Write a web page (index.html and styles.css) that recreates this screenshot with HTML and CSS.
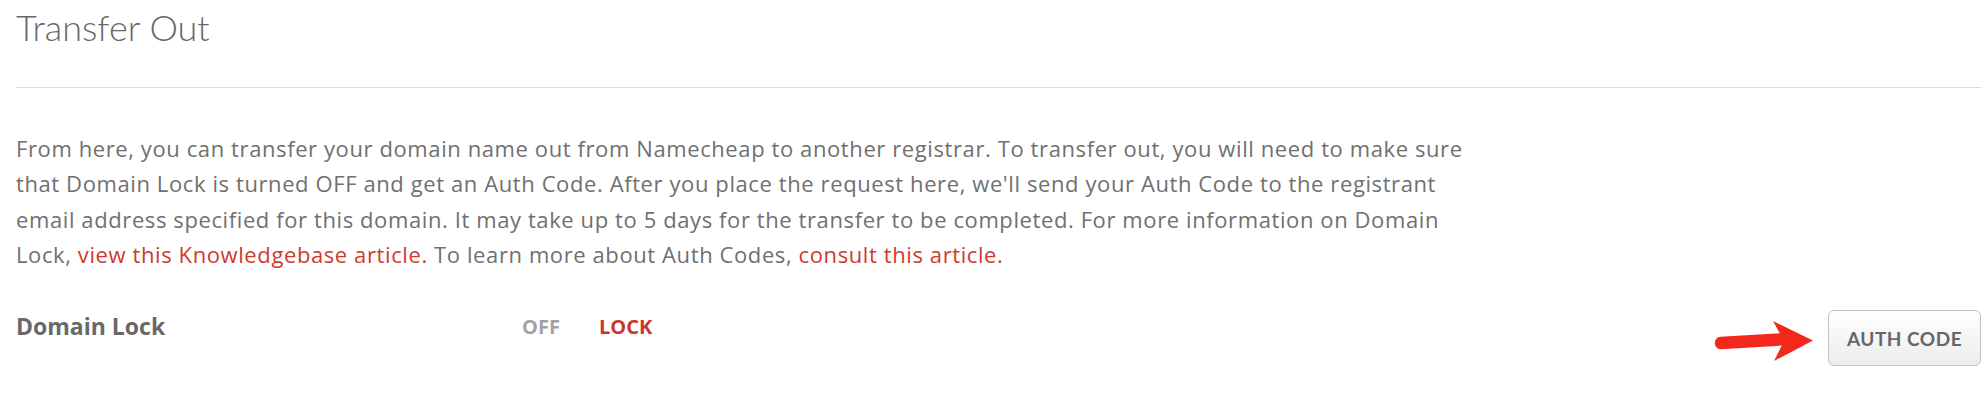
FILE: index.html
```html
<!DOCTYPE html>
<html lang="en">
<head>
<meta charset="utf-8">
<title>Transfer Out</title>
<link rel="stylesheet" href="styles.css">
</head>
<body>
<div class="panel">
  <header class="panel-head">
    <h2 class="panel-title">Transfer Out</h2>
  </header>
  <p class="intro">From here, you can transfer your domain name out from Namecheap to another registrar. To transfer out, you will need to make sure that Domain Lock is turned OFF and get an Auth Code. After you place the request here, we'll send your Auth Code to the registrant email address specified for this domain. It may take up to 5 days for the transfer to be completed. For more information on Domain Lock, <a class="link" href="#">view this Knowledgebase article.</a> To learn more about Auth Codes, <a class="link" href="#">consult this article.</a></p>
  <div class="lock-row">
    <div class="lock-label">Domain Lock</div>
    <div class="lock-state">OFF</div>
    <a class="lock-action" href="#">LOCK</a>
    <div class="lock-spacer"></div>
    <div class="auth">
      <svg class="arrow" width="102" height="44" viewBox="0 0 102 44" aria-hidden="true">
        <line x1="9" y1="24" x2="76" y2="20" stroke="#f2281c" stroke-width="12.5" stroke-linecap="round"/>
        <polygon points="61,2 101,21.5 62,42 72,22" fill="#f2281c"/>
      </svg>
      <button class="btn" type="button">AUTH CODE</button>
    </div>
  </div>
</div>
</body>
</html>
```

FILE: styles.css
```css
html, body {
  margin: 0;
  padding: 0;
  background: #ffffff;
}

body {
  font-family: "Open Sans", Lato, "Liberation Sans", sans-serif;
  color: #6b6b6b;
}

.panel {
  padding: 0 6px 0 16px;
}

.panel-head {
  padding-top: 6px;
  padding-bottom: 38px;
  border-bottom: 1px solid #dcdcdc;
}

.panel-title {
  margin: 0;
  font-family: Lato, "Open Sans", sans-serif;
  font-size: 36px;
  line-height: 43px;
  font-weight: 300;
  color: #686868;
}

.intro {
  margin: 43px 0 0 0;
  width: 1462px;
  font-size: 22px;
  line-height: 35.3px;
  font-weight: 400;
  letter-spacing: 0.6px;
  color: #707070;
}

.link {
  color: #d03a2c;
  text-decoration: none;
}

.lock-row {
  display: flex;
  align-items: flex-start;
  margin-top: 38px;
}

.lock-label {
  width: 506px;
  padding-top: 1px;
  font-size: 23px;
  line-height: 30px;
  font-weight: 700;
  color: #686868;
}

.lock-state,
.lock-action {
  padding-top: 3px;
  font-size: 20px;
  line-height: 28px;
  font-weight: 700;
}

.lock-state {
  width: 77px;
  color: #a2a2a2;
}

.lock-action {
  color: #c9372b;
  text-decoration: none;
}

.lock-spacer {
  flex: 1;
}

.auth {
  display: flex;
  align-items: center;
  gap: 14px;
}

.arrow {
  display: block;
  margin-top: 6px;
}

.btn {
  width: 153px;
  height: 56px;
  padding: 0;
  border: 1px solid #c2c2c2;
  border-radius: 6px;
  background: linear-gradient(#ffffff, #ececec);
  font-family: Lato, "Open Sans", "Liberation Sans", sans-serif;
  font-size: 19px;
  font-weight: 700;
  color: #666666;
  letter-spacing: 0.5px;
}
```
